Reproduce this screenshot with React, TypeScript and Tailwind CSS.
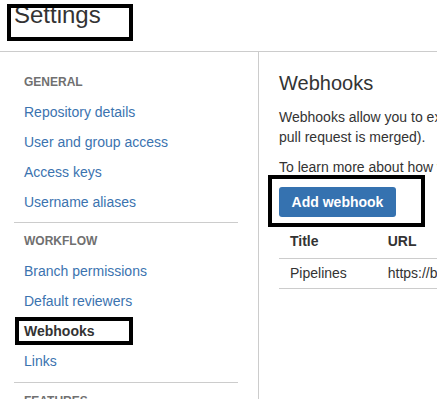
import React from "react";

const sections = [
  {
    title: "General",
    items: ["Repository details", "User and group access", "Access keys", "Username aliases"],
  },
  {
    title: "Workflow",
    items: ["Branch permissions", "Default reviewers", "Webhooks", "Links"],
  },
  {
    title: "Features",
    items: ["Wiki", "Issue tracker"],
  },
];

function Sidebar() {
  return (
    <div className="relative w-[259px] shrink-0 border-r border-[#cccccc] pl-[14px] pt-[16px]">
      {sections.map((section, i) => (
        <div key={section.title}>
          {i > 0 && <div className="w-[224px] border-t border-[#cccccc]" />}
          <div className={i > 0 ? "pt-[4px] pb-[6px]" : "pb-[5px]"}>
            <div className="pl-[10px] text-[12px] leading-[29px] font-bold uppercase text-[#707070]">
              {section.title}
            </div>
            {section.items.map((item) =>
              item === "Webhooks" ? (
                <div key={item} className="pl-[10px] text-[14px] leading-[30px] font-bold text-[#333333]">
                  {item}
                </div>
              ) : (
                <div key={item} className="pl-[10px] text-[14px] leading-[30px] text-[#3b73af]">
                  {item}
                </div>
              )
            )}
          </div>
        </div>
      ))}
      {/* annotation box */}
      <div className="absolute left-[15px] top-[265px] h-[28px] w-[118px] border-4 border-black" />
    </div>
  );
}

function Content() {
  return (
    <div className="relative flex-1 overflow-hidden pl-[20px] pt-[19px] text-[#333333]">
      <h2 className="text-[20px] leading-[24px] font-normal whitespace-nowrap">Webhooks</h2>
      <p className="mt-[12px] text-[14px] leading-[20px] whitespace-nowrap">
        Webhooks allow you to extend what Bitbucket does when the repository changes (for example, new code is pushed or a
        <br />
        pull request is merged).
      </p>
      <p className="mt-[10px] text-[14px] leading-[20px] whitespace-nowrap">
        To learn more about how webhooks work, read our documentation.
      </p>
      <button className="mt-[10px] flex h-[30px] w-[117px] items-center justify-center rounded-[3px] bg-[#3572b0] text-[14px] font-bold text-white">
        Add webhook
      </button>
      <table className="mt-[9px] w-[420px] border-collapse text-[14px]">
        <thead>
          <tr className="h-[32px] border-b border-[#cccccc]">
            <th className="w-[105px] pl-[11px] text-left font-bold">Title</th>
            <th className="pl-[11px] text-left font-bold">URL</th>
          </tr>
        </thead>
        <tbody>
          <tr className="h-[30px] border-b border-[#cccccc]">
            <td className="pl-[11px] whitespace-nowrap">Pipelines</td>
            <td className="pl-[11px] whitespace-nowrap">https://bitbucket-pipelines.prod.public.atl-paas.net/</td>
          </tr>
        </tbody>
      </table>
      {/* annotation box */}
      <div className="absolute left-[9px] top-[123px] h-[52px] w-[157px] border-4 border-black" />
    </div>
  );
}

export default function App() {
  return (
    <div
      className="relative h-[399px] w-full overflow-hidden bg-white"
      style={{ fontFamily: '"Liberation Sans", Arial, sans-serif' }}
    >
      <div className="relative h-[52px] border-b border-[#cccccc] pl-[14px] pt-[3px]">
        <h1 className="text-[24px] leading-[24px] font-normal text-[#333333]">Settings</h1>
        <div className="absolute left-[7px] top-[4px] h-[37px] w-[126px] border-4 border-black" />
      </div>
      <div className="flex h-[347px]">
        <Sidebar />
        <Content />
      </div>
    </div>
  );
}
